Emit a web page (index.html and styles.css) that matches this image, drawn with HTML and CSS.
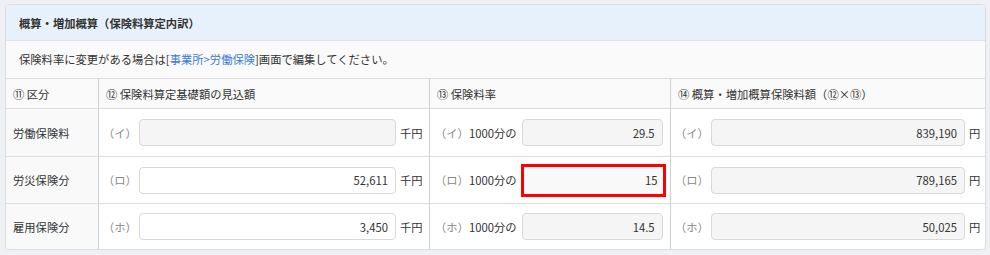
FILE: index.html
```html
<!DOCTYPE html>
<html lang="ja">
<head>
    <meta charset="UTF-8">
    <title>概算・増加概算</title>
    <link rel="stylesheet" href="styles.css">
</head>
<body>
<div class="card">
    <div class="card-title">概算・増加概算（保険料算定内訳）</div>
    <div class="notice">保険料率に変更がある場合は[<a href="#">事業所&gt;労働保険</a>]画面で編集してください。</div>
    <div class="grid">
        <div class="th">⑪ 区分</div>
        <div class="th">⑫ 保険料算定基礎額の見込額</div>
        <div class="th">⑬ 保険料率</div>
        <div class="th last">⑭ 概算・増加概算保険料額（⑫×⑬）</div>

        <div class="label">労働保険料</div>
        <div class="td base">
            <span class="kana">（イ）</span>
            <input class="field" type="text" value="" disabled>
            <span class="unit">千円</span>
        </div>
        <div class="td rate">
            <span class="kana">（イ）</span><span class="per">1000分の</span>
            <input class="field" type="text" value="29.5" disabled>
        </div>
        <div class="td amount last">
            <span class="kana">（イ）</span>
            <input class="field" type="text" value="839,190" disabled>
            <span class="unit">円</span>
        </div>

        <div class="label">労災保険分</div>
        <div class="td base">
            <span class="kana">（ロ）</span>
            <input class="field" type="text" value="52,611">
            <span class="unit">千円</span>
        </div>
        <div class="td rate">
            <span class="kana">（ロ）</span><span class="per">1000分の</span>
            <input class="field error" type="text" value="15" disabled>
        </div>
        <div class="td amount last">
            <span class="kana">（ロ）</span>
            <input class="field" type="text" value="789,165" disabled>
            <span class="unit">円</span>
        </div>

        <div class="label">雇用保険分</div>
        <div class="td base">
            <span class="kana">（ホ）</span>
            <input class="field" type="text" value="3,450">
            <span class="unit">千円</span>
        </div>
        <div class="td rate">
            <span class="kana">（ホ）</span><span class="per">1000分の</span>
            <input class="field" type="text" value="14.5" disabled>
        </div>
        <div class="td amount last">
            <span class="kana">（ホ）</span>
            <input class="field" type="text" value="50,025" disabled>
            <span class="unit">円</span>
        </div>
    </div>
</div>
</body>
</html>
```

FILE: styles.css
```css
* {
    margin: 0;
    padding: 0;
    box-sizing: border-box;
}

body {
    background-color: #eef0f3;
    padding: 4px 4px 0 5px;
    font-family: "Noto Sans CJK JP", "Noto Sans", sans-serif;
    font-size: 11.3px;
    color: #333;
}

.card {
    background-color: #fff;
    border: 1px solid #dadde2;
    border-radius: 4px;
    overflow: hidden;
}

.card-title {
    height: 36px;
    line-height: 36px;
    padding-left: 13px;
    background-color: #e7f1fc;
    border-bottom: 1px solid #d8e3ef;
    font-weight: bold;
}

.notice {
    height: 37px;
    line-height: 36px;
    padding-left: 13px;
    background-color: #fafafa;
}

.notice a {
    color: #3a7bd5;
    text-decoration: none;
}

.grid {
    display: grid;
    grid-template-columns: 93px 331px 241px 1fr;
    grid-template-rows: 30px 48px 47px 46px;
}

.grid > div {
    display: flex;
    align-items: center;
    white-space: nowrap;
    border-top: 1px solid #dcdcdc;
    border-right: 1px solid #d0d0d0;
}

.grid > .last {
    border-right: none;
}

.th {
    padding-left: 7px;
    background-color: #fafafa;
}

.label {
    padding-left: 7px;
    background-color: #f9f9f9;
}

.td {
    padding-left: 4px;
}

.kana {
    color: #888;
    width: 36px;
    flex: none;
}

.per {
    flex: none;
    margin-right: 5px;
}

.field {
    flex: none;
    height: 27px;
    border: 1px solid #d9d9d9;
    border-radius: 4px;
    background-color: #fff;
    padding-right: 7px;
    text-align: right;
    font-family: inherit;
    font-size: 11.3px;
    color: #333;
    outline: none;
}

.field:disabled {
    background-color: #f5f5f5;
    color: #333;
}

.base .field {
    width: 257px;
}

.rate .field {
    width: 141px;
}

.amount .field {
    width: 254px;
}

.unit {
    margin-left: 4px;
}

.rate .kana {
    width: auto;
    margin-left: 1px;
}

.field.error {
    width: 145px;
    height: 33px;
    border: 3px solid #f00;
    border-radius: 0;
    background-color: #f9f9f9;
    margin-left: -1px;
    padding-right: 5px;
}
```
